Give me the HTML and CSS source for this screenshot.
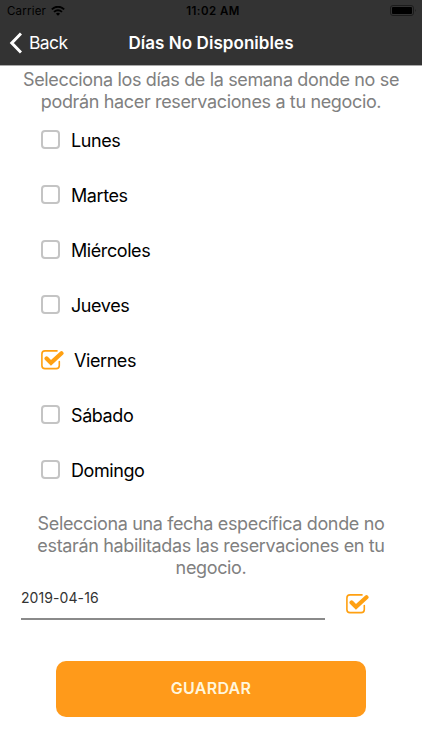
FILE: index.html
```html
<!DOCTYPE html>
<html lang="es">
<head>
<meta charset="utf-8">
<title>Días No Disponibles</title>
<link rel="stylesheet" href="styles.css">
</head>
<body>
<svg class="defs" width="0" height="0" aria-hidden="true">
  <symbol id="checked" viewBox="0 0 24 22">
    <path d="M17 1.900H5Q1.900 1.900 1.900 5V16.500Q1.900 19.600 5 19.600H16.200Q19.300 19.600 19.300 16.500V12.500" fill="none" stroke="currentColor" stroke-width="1.600" stroke-linecap="round"/>
    <path d="M6.600 9.500L11 13.900L21.500 4.300" fill="none" stroke="currentColor" stroke-width="4.200" stroke-linecap="round"/>
  </symbol>
</svg>
<header class="header">
  <div class="status">
    <div class="carrier"><span>Carrier</span>
      <svg width="14" height="10" viewBox="0 0 14 10"><path d="M.8 3.400Q7-2 13.200 3.400M3 5.900Q7 2.400 11 5.900" fill="none" stroke="currentColor" stroke-width="1.900"/><path d="M4.900 7.700Q7 6 9.100 7.700L7 9.800Z" fill="currentColor"/></svg>
    </div>
    <span class="time">11:02 AM</span>
    <svg class="battery" width="27" height="12" viewBox="0 0 27 12"><rect x=".5" y=".5" width="23" height="10" rx="2.500" fill="none" stroke="#1c1c1c"/><rect x="2" y="2" width="20" height="7" rx="1" fill="#000"/><path d="M25 4Q26.500 5.500 25 7Z" fill="#1c1c1c"/></svg>
  </div>
  <nav class="nav">
    <a class="back"><svg width="13" height="22" viewBox="0 0 13 22"><path d="M12 1.500L2.800 11L12 20.500" fill="none" stroke="currentColor" stroke-width="3"/></svg><span>Back</span></a>
    <h1 class="title">Días No Disponibles</h1>
  </nav>
</header>
<main>
  <p class="hint">Selecciona los días de la semana donde no se<br>podrán hacer reservaciones a tu negocio.</p>
  <ul class="days">
    <li><i class="box"></i><span>Lunes</span></li>
    <li><i class="box"></i><span>Martes</span></li>
    <li><i class="box"></i><span>Miércoles</span></li>
    <li><i class="box"></i><span>Jueves</span></li>
    <li><svg class="check"><use href="#checked"/></svg><span>Viernes</span></li>
    <li><i class="box"></i><span>Sábado</span></li>
    <li><i class="box"></i><span>Domingo</span></li>
  </ul>
  <p class="hint hint-date">Selecciona una fecha específica donde no<br>estarán habilitadas las reservaciones en tu<br>negocio.</p>
  <div class="date-row">
    <div class="date"><span>2019-04-16</span></div>
    <svg class="check"><use href="#checked"/></svg>
  </div>
  <button class="save"><span>GUARDAR</span></button>
</main>
</body>
</html>
```
FILE: styles.css
```css
* { box-sizing: border-box; }
body { margin: 0; width: 422px; height: 750px; overflow: hidden; background: #fff; font-family: Inter, "Liberation Sans", sans-serif; }
.defs { display: none; }
.header { height: 66px; background: #333; border-bottom: 1px solid #a9a9a9; }
.status { height: 22px; display: grid; grid-template-columns: 1fr auto 1fr; align-items: center; padding: 0 5px 0 7px; color: #000; font-size: 11.5px; }
.carrier { display: flex; align-items: center; gap: 5px; letter-spacing: .2px; }
.time { padding-left: 2px; font-weight: 600; letter-spacing: .45px; }
.battery { justify-self: end; }
.nav { height: 42px; display: grid; grid-template-columns: 1fr auto 1fr; align-items: center; padding: 0 9px; color: #fff; }
.back { display: flex; align-items: center; gap: 7px; font-size: 17.5px; letter-spacing: -.6px; padding-bottom: 1px; }
.title { margin: 0; font-size: 17px; font-weight: 600; letter-spacing: .06px; }
.hint { margin: 3px 0 0; text-align: center; font-size: 18px; line-height: 22px; color: #808080; letter-spacing: -.35px; white-space: nowrap; }
.days { list-style: none; margin: 0; padding: 0 0 0 40px; }
.days li { height: 55px; display: flex; align-items: center; font-size: 18px; letter-spacing: -.42px; color: #000; }
.box { width: 19px; height: 19px; margin: 0 11px 2px 1px; border: 2px solid #c4c4c4; border-radius: 4px; }
.check { width: 24px; height: 22px; color: #ffa011; }
.days .check { margin: 0 10px 2px 0; }
.hint-date { margin-top: 15px; }
.date-row { display: flex; align-items: flex-start; padding: 6px 0 0 21px; height: 49px; }
.date { width: 304px; height: 35px; padding-top: 3px; border-bottom: 2px solid #8a8a8a; font-size: 14px; line-height: 20px; color: #333; letter-spacing: .08px; margin-right: 20px; }
.date-row .check { margin-top: 8px; }
.save { display: flex; align-items: center; justify-content: center; width: 310px; height: 56px; margin: 33px auto 0 56px; padding-bottom: 3px; border: 0; border-radius: 10px; background: #ff9a1a; color: #fff6dc; font: 600 16px Inter, "Liberation Sans", sans-serif; letter-spacing: .25px; }
```
